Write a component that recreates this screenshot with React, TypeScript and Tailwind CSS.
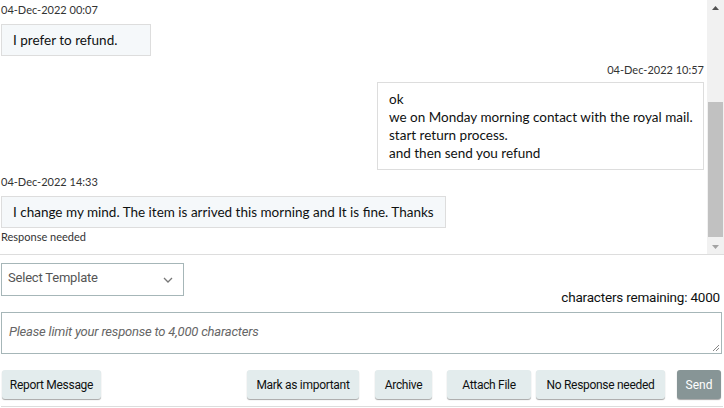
import React from "react";

const msgFont = { fontFamily: "Lato, 'Open Sans', sans-serif" };
const narrow = { fontFamily: "Roboto, 'Liberation Sans', sans-serif" };

function Btn({ children, className = "" }: { children: React.ReactNode; className?: string }) {
  return (
    <button
      className={
        "h-[29px] rounded-[3px] bg-[#e3eced] text-[12px] tracking-[-0.3px] text-[#0f1111] shadow-[0_1px_1px_rgba(0,0,0,0.35)] " +
        className
      }
      style={narrow}
    >
      {children}
    </button>
  );
}

export default function App() {
  return (
    <div className="w-[724px] h-[408px] bg-white overflow-hidden text-[#0f1111]" style={msgFont}>
      <div className="flex h-[255px] border-b border-[#ddd]">
        <div className="flex-1 flex flex-col pl-[1px] pr-[3px]">
          <div className="text-[11px] text-[#333] mt-[3px] leading-[14px]">04-Dec-2022 00:07</div>
          <div className="mt-[7px] w-[150px] h-[32px] border border-[#ddd] bg-[#f5f8fa] text-[13.5px] pl-[11px] leading-[30px]">
            I prefer to refund.
          </div>
          <div className="self-end text-[11px] text-[#333] mt-[7px] leading-[14px]">04-Dec-2022 10:57</div>
          <div className="self-end mt-[5px] w-[327px] h-[88px] border border-[#ddd] bg-white text-[13.5px] pl-[11px] pt-[7px] leading-[18px]">
            <div>ok</div>
            <div>we on Monday morning contact with the royal mail.</div>
            <div>start return process.</div>
            <div>and then send you refund</div>
          </div>
          <div className="text-[11px] text-[#333] mt-[5px] leading-[14px]">04-Dec-2022 14:33</div>
          <div className="mt-[7px] self-start h-[32px] border border-[#ddd] bg-[#f5f8fa] text-[13.5px] px-[11px] leading-[30px]">
            I change my mind. The item is arrived this morning and It is fine. Thanks
          </div>
          <div className="text-[11px] text-[#333] mt-[2px] leading-[14px]">Response needed</div>
        </div>
        <div className="w-[17px] bg-[#f1f1f1] flex flex-col items-center">
          <div className="h-[15px] flex items-center justify-center">
            <svg width="7" height="4" viewBox="0 0 7 4"><path d="M3.5 0L7 4H0z" fill="#505050" /></svg>
          </div>
          <div className="mt-[87px] w-[15px] h-[135px] bg-[#c1c1c1]" />
          <div className="mt-auto h-[15px] flex items-center justify-center">
            <svg width="7" height="4" viewBox="0 0 7 4"><path d="M0 0H7L3.5 4z" fill="#a3a3a3" /></svg>
          </div>
        </div>
      </div>

      <div className="px-[1px] pt-[8px]">
        <div className="w-[183px] h-[33px] border border-[#a6b6b8] flex items-center justify-between pl-[6px] pr-[10px] pb-[3px]">
          <span className="text-[13px] tracking-[-0.2px] text-[#555]" style={narrow}>Select Template</span>
          <svg className="mt-[3px]" width="10" height="6" viewBox="0 0 10 6" fill="none"><path d="M1 1l4 4 4-4" stroke="#777" strokeWidth="1.3" /></svg>
        </div>
        <div className="text-right text-[13.5px] tracking-[-0.2px] text-[#0f1111] pr-[3px] -mt-[7px] leading-[16px]" style={narrow}>
          characters remaining: 4000
        </div>
        <div className="relative mt-[7px] w-[721px] h-[42px] border border-[#a6b6b8] pl-[7px] pt-[5px]">
          <span className="italic text-[13px] tracking-[-0.2px] text-[#666]" style={narrow}>
            Please limit your response to 4,000 characters
          </span>
          <svg className="absolute right-[1px] bottom-[1px]" width="8" height="8" viewBox="0 0 8 8">
            <path d="M7 1L1 7M7 4L4 7" stroke="#888" strokeWidth="1" />
          </svg>
        </div>
        <div className="flex items-center mt-[16px] pl-[1px]">
          <Btn className="w-[99px]">Report Message</Btn>
          <Btn className="w-[112px] ml-[146px]">Mark as important</Btn>
          <Btn className="w-[57px] ml-[16px]">Archive</Btn>
          <Btn className="w-[84px] ml-[15px]">Attach File</Btn>
          <Btn className="w-[129px] ml-[5px]">No Response needed</Btn>
          <button
            className="h-[29px] w-[44px] ml-[12px] rounded-[3px] bg-[#879596] text-white text-[12px] shadow-[0_1px_1px_rgba(0,0,0,0.35)]"
            style={narrow}
          >
            Send
          </button>
        </div>
        <div className="mt-[7px] border-b border-[#ddd]" />
      </div>
    </div>
  );
}
